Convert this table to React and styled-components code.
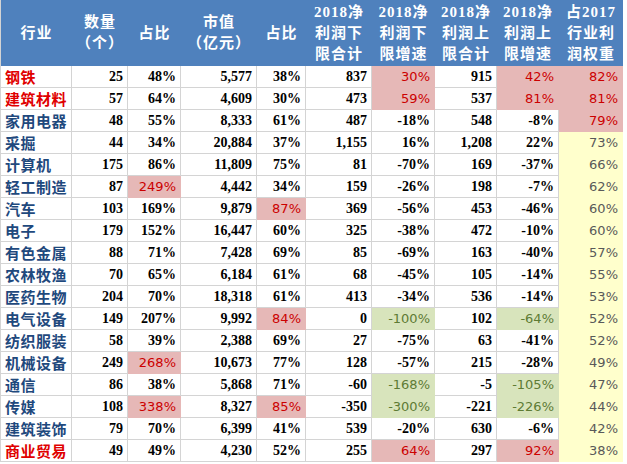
import React from "react";
import styled, { createGlobalStyle } from "styled-components";

const GlobalStyle = createGlobalStyle`
  html, body {
    margin: 0;
    padding: 0;
    background: #ffffff;
  }
`;

const widths = [71, 56, 53, 76, 49, 66, 63, 62, 62, 64];

const headers = [
  ["行业"],
  ["数量", "（个）"],
  ["占比"],
  ["市值", "（亿元）"],
  ["占比"],
  ["2018净", "利润下", "限合计"],
  ["2018净", "利润下", "限增速"],
  ["2018净", "利润上", "限合计"],
  ["2018净", "利润上", "限增速"],
  ["占2017", "行业利", "润权重"],
];

// p = pink highlight, g = green highlight
const rows = [
  { name: "钢铁", red: true, cells: ["25", "48%", "5,577", "38%", "837", "p:30%", "915", "p:42%", "p:82%"] },
  { name: "建筑材料", red: true, cells: ["57", "64%", "4,609", "30%", "473", "p:59%", "537", "p:81%", "p:81%"] },
  { name: "家用电器", cells: ["48", "55%", "8,333", "61%", "487", "-18%", "548", "-8%", "p:79%"] },
  { name: "采掘", cells: ["44", "34%", "20,884", "37%", "1,155", "16%", "1,208", "22%", "73%"] },
  { name: "计算机", cells: ["175", "86%", "11,809", "75%", "81", "-70%", "169", "-37%", "66%"] },
  { name: "轻工制造", cells: ["87", "p:249%", "4,442", "34%", "159", "-26%", "198", "-7%", "62%"] },
  { name: "汽车", cells: ["103", "169%", "9,879", "p:87%", "369", "-56%", "453", "-46%", "60%"] },
  { name: "电子", cells: ["179", "152%", "16,447", "60%", "325", "-38%", "472", "-10%", "60%"] },
  { name: "有色金属", cells: ["88", "71%", "7,428", "69%", "85", "-69%", "163", "-40%", "57%"] },
  { name: "农林牧渔", cells: ["70", "65%", "6,184", "61%", "68", "-45%", "105", "-14%", "55%"] },
  { name: "医药生物", cells: ["204", "70%", "18,318", "61%", "413", "-34%", "536", "-14%", "53%"] },
  { name: "电气设备", cells: ["149", "207%", "9,992", "p:84%", "0", "g:-100%", "102", "g:-64%", "52%"] },
  { name: "纺织服装", cells: ["58", "39%", "2,388", "69%", "27", "-75%", "63", "-41%", "52%"] },
  { name: "机械设备", cells: ["249", "p:268%", "10,673", "77%", "128", "-57%", "215", "-28%", "49%"] },
  { name: "通信", cells: ["86", "38%", "5,868", "71%", "-60", "g:-168%", "-5", "g:-105%", "47%"] },
  { name: "传媒", cells: ["108", "p:338%", "8,327", "p:85%", "-350", "g:-300%", "-221", "g:-226%", "44%"] },
  { name: "建筑装饰", cells: ["79", "70%", "6,399", "41%", "539", "-20%", "630", "-6%", "42%"] },
  { name: "商业贸易", red: true, cells: ["49", "49%", "4,230", "52%", "255", "p:64%", "297", "p:92%", "38%"] },
];

const parse = (raw, isLast) => {
  if (raw.startsWith("p:")) return { tone: "pink", text: raw.slice(2) };
  if (raw.startsWith("g:")) return { tone: "green", text: raw.slice(2) };
  return { tone: isLast ? "yellow" : "plain", text: raw };
};

export default function App() {
  return (
    <>
      <GlobalStyle />
      <Sheet $cols={widths.map((w) => `${w}px`).join(" ")}>
        {headers.map((lines, i) => (
          <HeadCell key={"h" + i}>
            {lines.map((l) => (
              <HeadLine key={l}>{l}</HeadLine>
            ))}
          </HeadCell>
        ))}
        {rows.map((row) => (
          <React.Fragment key={row.name}>
            <NameCell $red={row.red}>{row.name}</NameCell>
            {row.cells.map((raw, i) => {
              const { tone, text } = parse(raw, i === row.cells.length - 1);
              return (
                <Cell key={i} $tone={tone}>
                  {text}
                </Cell>
              );
            })}
          </React.Fragment>
        ))}
      </Sheet>
    </>
  );
}

const fills = {
  plain: "#ffffff",
  pink: "#e6b8b7",
  green: "#d8e4bc",
  yellow: "#ffffcc",
};

const inks = {
  plain: "#000000",
  pink: "#cc0000",
  green: "#5e7b34",
  yellow: "#595959",
};

const Sheet = styled.div`
  display: grid;
  grid-template-columns: ${(p) => p.$cols};
  grid-template-rows: 66px;
  grid-auto-rows: 22px;
  width: 623px;
  border-left: 1px solid #d4d4d4;
`;

const HeadCell = styled.div`
  display: flex;
  flex-direction: column;
  align-items: center;
  justify-content: center;
  background: #4f81bd;
  color: #ffffff;
  font-family: "Liberation Serif", "Noto Sans CJK SC", serif;
  font-weight: 700;
  font-size: 15px;
  line-height: 21px;
  letter-spacing: 1px;
  white-space: nowrap;
`;

const HeadLine = styled.span`
  display: block;
`;

const BaseCell = styled.div`
  box-sizing: border-box;
  display: flex;
  align-items: center;
  border-right: 1px solid #d4d4d4;
  border-bottom: 1px solid #d4d4d4;
  white-space: nowrap;
  overflow: hidden;
`;

const NameCell = styled(BaseCell)`
  padding-left: 4px;
  color: ${(p) => (p.$red ? "#e00000" : "#1f497d")};
  font-family: "Noto Sans CJK SC", sans-serif;
  font-weight: 700;
  font-size: 15px;
  letter-spacing: 0.5px;
`;

const Cell = styled(BaseCell)`
  justify-content: flex-end;
  padding-right: 4px;
  background: ${(p) => fills[p.$tone]};
  border-color: ${(p) => (p.$tone === "plain" ? "#d4d4d4" : fills[p.$tone])};
  color: ${(p) => inks[p.$tone]};
  font-family: ${(p) =>
    p.$tone === "plain" ? `"Liberation Serif", serif` : `"DejaVu Sans", sans-serif`};
  font-weight: ${(p) => (p.$tone === "plain" ? 700 : 400)};
  font-size: ${(p) => (p.$tone === "plain" ? "14px" : "13px")};
`;
